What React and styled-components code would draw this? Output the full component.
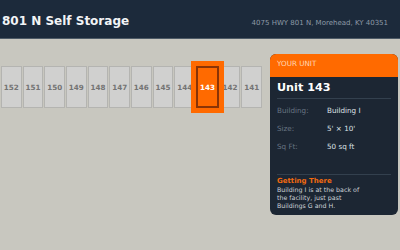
import React from 'react';
import styled, { createGlobalStyle } from 'styled-components';

const GlobalStyle = createGlobalStyle`
  html, body {
    margin: 0;
    padding: 0;
    background: #c8c7bf;
    font-family: "DejaVu Sans", Verdana, sans-serif;
  }
`;

const Page = styled.div`
  width: 400px;
  height: 250px;
  overflow: hidden;
  background: #c8c7bf;
`;

const Header = styled.header`
  height: 39px;
  box-sizing: border-box;
  display: flex;
  align-items: baseline;
  justify-content: space-between;
  padding: 14px 12px 0 2px;
  background: #1c2a3b;
  border-bottom: 1px solid #4d5a66;
`;

const Title = styled.h1`
  margin: 0;
  font-size: 12px;
  font-weight: bold;
  color: #f2f4f6;
`;

const Address = styled.span`
  font-size: 7px;
  color: #8e9aa7;
`;

const Main = styled.main`
  display: flex;
  align-items: flex-start;
  gap: 8px;
  padding: 15px 2px 0 1px;
`;

const UnitRow = styled.div`
  flex: 1;
  display: flex;
  gap: 1px;
  margin-top: 12px;
`;

const Unit = styled.div`
  flex: 1;
  height: 42px;
  box-sizing: border-box;
  display: flex;
  align-items: center;
  justify-content: center;
  position: relative;
  font-size: 7.2px;
  font-weight: bold;
  background: ${(p) => (p.$active ? '#ff6a00' : '#d0d0cf')};
  color: ${(p) => (p.$active ? '#ffffff' : '#747474')};
  border: ${(p) => (p.$active ? '2px solid #8a3406' : '1px solid #b4b4b1')};
  box-shadow: ${(p) => (p.$active ? '0 0 0 5px #ff6a00' : 'none')};
  z-index: ${(p) => (p.$active ? 1 : 0)};
`;

const Panel = styled.aside`
  width: 128px;
  height: 161px;
  box-sizing: border-box;
  background: #1c2633;
  border-radius: 6px;
  overflow: hidden;
`;

const PanelTop = styled.div`
  height: 23px;
  box-sizing: border-box;
  padding: 5px 7px 0;
  background: #ff6a00;
  color: #ffd8b6;
  font-size: 7.2px;
  text-transform: uppercase;
`;

const PanelBody = styled.div`
  padding: 4px 7px 0;
`;

const UnitName = styled.h2`
  margin: 0;
  padding-bottom: 4px;
  font-size: 11.2px;
  font-weight: bold;
  color: #ffffff;
  border-bottom: 1px solid #33404e;
`;

const Rows = styled.div`
  margin-top: 2px;
`;

const Row = styled.div`
  height: 18px;
  display: flex;
  align-items: center;
  font-size: 7.2px;
`;

const Label = styled.span`
  width: 50px;
  color: #687583;
`;

const Value = styled.span`
  color: #dfe3e7;
`;

const Directions = styled.div`
  margin-top: 19px;
  padding-top: 1px;
  border-top: 1px solid #33404e;
`;

const DirTitle = styled.div`
  font-size: 7px;
  line-height: 10px;
  font-weight: bold;
  color: #f26a0f;
`;

const DirText = styled.p`
  margin: 0;
  max-width: 92px;
  font-size: 6.3px;
  line-height: 8px;
  color: #cdd3d9;
`;

const units = [152, 151, 150, 149, 148, 147, 146, 145, 144, 143, 142, 141];

const App = () => {
  return (
    <Page>
      <GlobalStyle />
      <Header>
        <Title>801 N Self Storage</Title>
        <Address>4075 HWY 801 N, Morehead, KY 40351</Address>
      </Header>
      <Main>
        <UnitRow>
          {units.map((u) => (
            <Unit key={u} $active={u === 143}>{u}</Unit>
          ))}
        </UnitRow>
        <Panel>
          <PanelTop>Your Unit</PanelTop>
          <PanelBody>
            <UnitName>Unit 143</UnitName>
            <Rows>
              <Row><Label>Building:</Label><Value>Building I</Value></Row>
              <Row><Label>Size:</Label><Value>5' × 10'</Value></Row>
              <Row><Label>Sq Ft:</Label><Value>50 sq ft</Value></Row>
            </Rows>
            <Directions>
              <DirTitle>Getting There</DirTitle>
              <DirText>Building I is at the back of the facility, just past Buildings G and H.</DirText>
            </Directions>
          </PanelBody>
        </Panel>
      </Main>
    </Page>
  );
};

export default App;
